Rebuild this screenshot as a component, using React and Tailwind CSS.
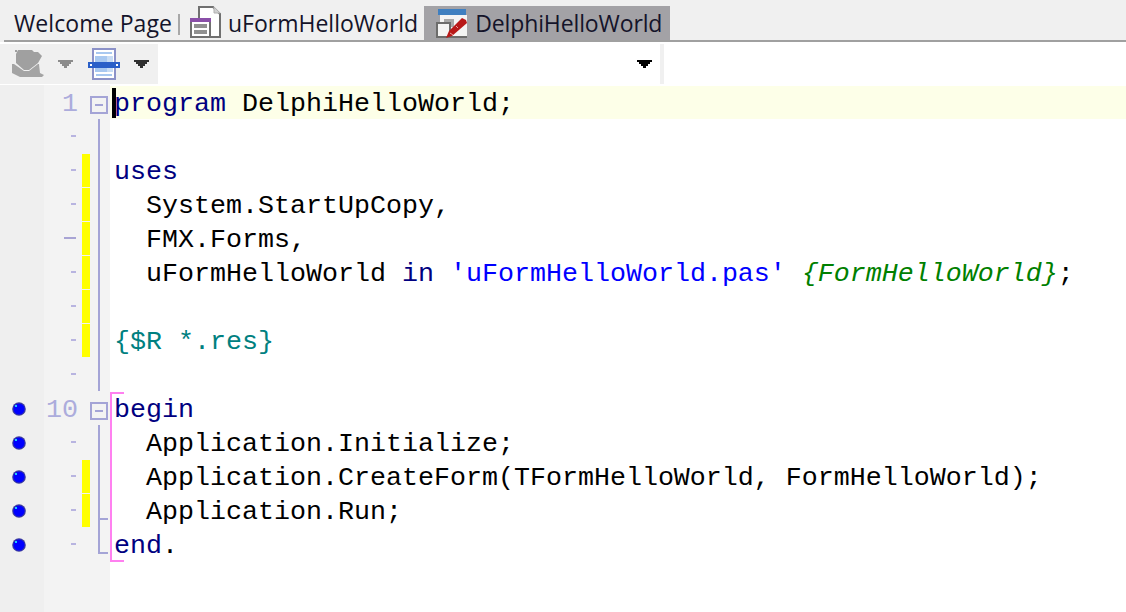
import React from "react";

const mono = "font-['Liberation_Mono',monospace] text-[26.67px] leading-[34px]";

const N = "text-black";
const K = "text-[#000080]";
const S = "text-[#0000ff]";
const C = "text-[#008000] italic";
const D = "text-[#008080]";

const lines = [
  { num: "1", fold: "box", code: [["program", K], [" DelphiHelloWorld;", N]], active: true },
  { tick: "s", fold: "line" },
  { tick: "s", fold: "line", mark: true, code: [["uses", K]] },
  { tick: "s", fold: "line", mark: true, code: [["  System.StartUpCopy,", N]] },
  { tick: "l", fold: "line", mark: true, code: [["  FMX.Forms,", N]] },
  {
    tick: "s",
    fold: "line",
    mark: true,
    code: [
      ["  uFormHelloWorld ", N],
      ["in", K],
      [" ", N],
      ["'uFormHelloWorld.pas'", S],
      [" ", N],
      ["{FormHelloWorld}", C],
      [";", N],
    ],
  },
  { tick: "s", fold: "line", mark: true },
  { tick: "s", fold: "line", mark: true, code: [["{$R *.res}", D]] },
  { tick: "s", fold: "line" },
  { num: "10", fold: "box", dot: true, code: [["begin", K]] },
  { tick: "s", fold: "line", dot: true, code: [["  Application.Initialize;", N]] },
  {
    tick: "s",
    fold: "line",
    dot: true,
    mark: true,
    code: [["  Application.CreateForm(TFormHelloWorld, FormHelloWorld);", N]],
  },
  { tick: "s", fold: "tick", dot: true, mark: true, code: [["  Application.Run;", N]] },
  { tick: "s", fold: "end", dot: true, code: [["end", K], [".", N]] },
];

const Arrow = ({ className }) => (
  <svg width="15" height="8" viewBox="0 0 15 8" className={className}>
    <path d="M0 0h15v2h-2v2h-2v2h-2v2H6V6H4V4H2V2H0z" fill="currentColor" />
  </svg>
);

const Dot = () => (
  <svg width="14" height="14" viewBox="0 0 14 14">
    <circle cx="7" cy="7" r="6.8" fill="#3a3aa0" />
    <circle cx="7" cy="7" r="5.6" fill="#0000ff" />
    <rect x="3" y="3" width="2" height="2" fill="#20c8ff" />
  </svg>
);

const FoldCell = ({ type }) => (
  <div className="relative h-full w-5 shrink-0">
    {type === "box" && (
      <div className="absolute left-0 top-[11px] flex h-[18px] w-[18px] items-center justify-center border-2 border-[#a4a4d6]">
        <div className="h-[2px] w-2 bg-[#a4a4d6]" />
      </div>
    )}
    {type === "line" && <div className="absolute bottom-0 left-2 top-0 w-[2px] bg-[#a4a4d6]" />}
    {type === "tick" && (
      <>
        <div className="absolute bottom-0 left-2 top-0 w-[2px] bg-[#a4a4d6]" />
        <div className="absolute left-2 top-[25px] h-[2px] w-[10px] bg-[#a4a4d6]" />
      </>
    )}
    {type === "end" && (
      <div className="absolute left-2 top-0 h-[27px] w-[10px] border-b-2 border-l-2 border-[#a4a4d6]" />
    )}
  </div>
);

const Row = ({ line }) => (
  <div className="flex h-[34px]">
    <div className="flex h-full w-[44px] shrink-0 items-center justify-center pt-[2px] pr-[6px] bg-[#efefef]">
      {line.dot && <Dot />}
    </div>
    <div className="flex h-full w-[66px] shrink-0 bg-[#f3f3f3]">
      <div className={`flex h-full w-[34px] shrink-0 items-center justify-end text-[#acacdc] ${mono}`}>
        {line.num && <span className="relative top-[2px]">{line.num}</span>}
        {line.tick === "s" && <div className="mr-[2px] h-[2px] w-[5px] bg-[#b8b4e0]" />}
        {line.tick === "l" && <div className="mr-[2px] h-[2px] w-3 bg-[#a8a4d4]" />}
      </div>
      <div className="ml-1 h-full w-2 shrink-0 pt-[1px]">
        {line.mark && <div className="h-full bg-[#ffff00]" />}
      </div>
      <FoldCell type={line.fold} />
    </div>
    <div className={`relative min-w-0 flex-1 whitespace-pre pl-1 ${mono} ${line.active ? "mt-[1px] bg-[#fdffe8]" : ""}`}>
      {line.active && <div className="absolute left-[2px] top-[2px] h-[30px] w-1 bg-black" />}
      {line.code?.map(([text, color], i) => (
        <span key={i} className={`relative ${color} ${line.active ? "top-[1px]" : "top-[2px]"}`}>
          {text}
        </span>
      ))}
    </div>
  </div>
);

export default function App() {
  return (
    <div className="flex h-[612px] w-[1126px] flex-col overflow-hidden bg-white">
      {/* tabs */}
      <div className="h-[42px] shrink-0 bg-[#f0f0f0] pl-1">
        <div className="flex h-full items-end border-b-2 border-[#a0a0a0] font-['Open_Sans',sans-serif] text-[23px] leading-[34px] text-[#14142a]">
          <div className="flex h-[34px] items-center pl-[10px]">
            <span className="tracking-[0.08px]">Welcome Page</span>
            <div className="ml-[6px] mt-[2px] h-[21px] w-[2px] bg-[#a8a8a8]" />
          </div>
          <div className="flex h-[34px] items-center pl-[10px]">
            <svg width="32" height="32" viewBox="0 0 32 32" className="mb-[2px] mr-[6px]">
              <path d="M9 12V1h14l7 7v23H20" fill="#fff" stroke="#707070" strokeWidth="2" />
              <path d="M24 1v6h6z" fill="#d0d0d0" stroke="#b0b0b0" strokeWidth="1" />
              <rect x="1" y="13" width="19" height="18" fill="#fff" stroke="#707070" strokeWidth="2" />
              <rect x="0" y="12" width="21" height="4" fill="#8a4fa8" />
              <rect x="4" y="18" width="13" height="4" fill="#909090" />
              <rect x="4" y="24" width="13" height="4" fill="#909090" />
            </svg>
            <span>uFormHelloWorld</span>
          </div>
          <div className="ml-[6px] flex h-[34px] w-[246px] items-center bg-[#a3a2a6] pl-3">
            <svg width="32" height="32" viewBox="0 0 32 32" className="mr-[7px]">
              <rect x="2" y="2" width="28" height="6" fill="#3f7fc0" />
              <rect x="4" y="8" width="27" height="22" fill="#f4f4f4" />
              <path d="M8 12h10v8H8z" fill="#a8a8a8" />
              <rect x="1" y="16" width="13" height="14" fill="#f4f4f4" stroke="#6c6c6c" strokeWidth="2" />
              <path d="M14 30h17" stroke="#6c6c6c" strokeWidth="2" />
              <path d="M10 31l3-7L26 11l4 2 1 3-15 13z" fill="#b81818" />
              <path d="M14 26l3 2M20 19l2 2" stroke="#e8a0a0" strokeWidth="1" />
            </svg>
            <span className="tracking-[-0.12px]">DelphiHelloWorld</span>
          </div>
        </div>
      </div>

      {/* toolbar */}
      <div className="mt-[2px] flex h-[40px] shrink-0 bg-[#f0f0f0]">
        <div className="flex w-[158px] shrink-0 items-center pl-3">
          <svg width="32" height="28" viewBox="0 0 32 28" className="mr-[14px]">
            <path d="M3 0h2v2H3z" fill="#a0a0a0" />
            <path d="M6 0h14l2 2h4l4 4-4 7-9 7h-5l-8-7V4z" fill="#a0a0a0" />
            <path d="M0 14h2l10 7h5l9-7h1l1 9 4 2-2 2H8l-4-2-4-2z" fill="#a4a4a4" />
          </svg>
          <Arrow className="text-[#8c8c8c]" />
          <svg width="32" height="32" viewBox="0 0 32 32" className="ml-[15px] mr-[14px]">
            <rect x="5" y="1" width="22" height="30" fill="#fff" stroke="#8c92c8" strokeWidth="2" />
            <path d="M8 5h16M8 27h16" stroke="#a8c8f0" strokeWidth="2" />
            <rect x="7" y="8" width="12" height="16" fill="#a8c8f0" />
            <rect x="19" y="8" width="6" height="16" fill="#c8dcf4" />
            <rect x="0" y="14" width="32" height="6" fill="#2a5fc8" />
            <rect x="2" y="16" width="2" height="2" fill="#fff" />
            <rect x="28" y="16" width="2" height="2" fill="#fff" />
          </svg>
          <Arrow className="text-[#303030]" />
        </div>
        <div className="flex w-[502px] shrink-0 items-center justify-end bg-white pr-2">
          <Arrow className="text-black" />
        </div>
        <div className="ml-1 flex-1 bg-white" />
      </div>

      {/* editor */}
      <div className="relative mt-[1px] flex min-h-0 flex-1 flex-col">
        {lines.map((line, i) => (
          <Row key={i} line={line} />
        ))}
        <div className="flex flex-1">
          <div className="w-[44px] bg-[#efefef]" />
          <div className="w-[66px] bg-[#f3f3f3]" />
        </div>
        {/* begin..end bracket */}
        <div className="absolute left-[110px] top-[307px] h-[170px] w-[14px] border-y-2 border-l-2 border-[#ff80f0]" />
      </div>
    </div>
  );
}
